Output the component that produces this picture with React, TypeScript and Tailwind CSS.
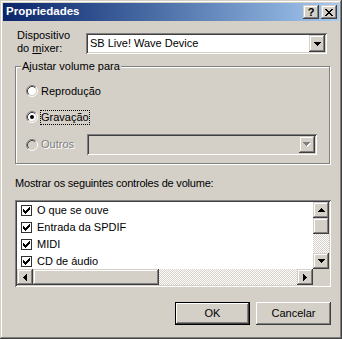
import type { ReactNode } from 'react';

// classic 3D edges
const raisedBtn =
  'shadow-[inset_-1px_-1px_#404040,inset_1px_1px_#ffffff,inset_-2px_-2px_#808080,inset_2px_2px_#d4d0c8]';
const raisedSmall =
  'shadow-[inset_-1px_-1px_#404040,inset_1px_1px_#d4d0c8,inset_-2px_-2px_#808080,inset_2px_2px_#ffffff]';
const sunken =
  'shadow-[inset_1px_1px_#808080,inset_-1px_-1px_#ffffff,inset_2px_2px_#404040,inset_-2px_-2px_#d4d0c8]';
const dither =
  'bg-[repeating-conic-gradient(#d4d0c8_0_25%,#ffffff_0_50%)] bg-[length:2px_2px]';

const Arrow = ({ dir, color = '#000' }: { dir: 'up' | 'down' | 'left' | 'right'; color?: string }) => {
  const paths = {
    down: 'M0 0h7v1H0z M1 1h5v1H1z M2 2h3v1H2z M3 3h1v1H3z',
    up: 'M3 0h1v1H3z M2 1h3v1H2z M1 2h5v1H1z M0 3h7v1H0z',
    right: 'M0 0h1v7H0z M1 1h1v5H1z M2 2h1v3H2z M3 3h1v1H3z',
    left: 'M3 0h1v7H3z M2 1h1v5H2z M1 2h1v3H1z M0 3h1v1H0z',
  };
  const vertical = dir === 'up' || dir === 'down';
  return (
    <svg
      width={vertical ? 7 : 4}
      height={vertical ? 4 : 7}
      viewBox={vertical ? '0 0 7 4' : '0 0 4 7'}
      shapeRendering="crispEdges"
    >
      <path d={paths[dir]} fill={color} />
    </svg>
  );
};

const ScrollButton = ({ dir, className = '' }: { dir: 'up' | 'down' | 'left' | 'right'; className?: string }) => (
  <div className={`flex items-center justify-center bg-[#d4d0c8] ${raisedSmall} ${className}`}>
    <Arrow dir={dir} />
  </div>
);

const Radio = ({ checked = false, disabled = false }: { checked?: boolean; disabled?: boolean }) => (
  <svg width="12" height="12" viewBox="0 0 12 12" className="shrink-0">
    <circle cx="6" cy="6" r="4.5" fill={disabled ? '#d4d0c8' : '#ffffff'} />
    <path d="M9.89 2.11 A5.5 5.5 0 0 0 2.11 9.89" stroke="#808080" fill="none" />
    <path d="M2.11 9.89 A5.5 5.5 0 0 0 9.89 2.11" stroke="#ffffff" fill="none" />
    <path d="M9.18 2.82 A4.5 4.5 0 0 0 2.82 9.18" stroke="#404040" fill="none" />
    <path d="M2.82 9.18 A4.5 4.5 0 0 0 9.18 2.82" stroke="#d4d0c8" fill="none" />
    {checked && <circle cx="6" cy="6" r="2" fill="#000000" />}
  </svg>
);

const Check = () => (
  <svg width="11" height="11" viewBox="0 0 11 11" shapeRendering="crispEdges" className="shrink-0">
    <rect x="0.5" y="0.5" width="10" height="10" fill="#ffffff" stroke="#303030" />
    <path
      d="M2 4h1v3H2z M3 5h1v3H3z M4 6h1v3H4z M5 5h1v3H5z M6 4h1v3H6z M7 3h1v3H7z M8 2h1v3H8z"
      fill="#000000"
    />
  </svg>
);

const Combo = ({ value = '', disabled = false, className = '' }: { value?: string; disabled?: boolean; className?: string }) => (
  <div className={`h-[21px] p-[2px] flex ${sunken} ${className}`}>
    <div className={`flex-1 pl-[2px] leading-[17px] ${disabled ? 'bg-[#d4d0c8]' : 'bg-white'}`}>{value}</div>
    <div className={`w-[16px] h-[17px] flex items-center justify-center bg-[#d4d0c8] ${raisedSmall}`}>
      {disabled ? (
        <div className="relative w-[8px] h-[5px]">
          <div className="absolute left-[1px] top-[1px]">
            <Arrow dir="down" color="#ffffff" />
          </div>
          <div className="absolute left-0 top-0">
            <Arrow dir="down" color="#808080" />
          </div>
        </div>
      ) : (
        <Arrow dir="down" />
      )}
    </div>
  </div>
);

const PushButton = ({ children, isDefault = false }: { children: ReactNode; isDefault?: boolean }) => (
  <div
    className={`w-[75px] h-[23px] flex items-center justify-center bg-[#d4d0c8] ${raisedBtn} ${
      isDefault ? 'border border-black' : ''
    }`}
  >
    {children}
  </div>
);

const controls = ['O que se ouve', 'Entrada da SPDIF', 'MIDI', 'CD de áudio'];

export default function App() {
  return (
    <div
      className={`w-[342px] h-[339px] bg-[#d4d0c8] flex flex-col font-['Liberation_Sans',Arial,sans-serif] text-[11px] text-black shadow-[inset_-1px_-1px_#404040,inset_1px_1px_#d4d0c8,inset_-2px_-2px_#808080,inset_2px_2px_#ffffff]`}
    >
      {/* title bar */}
      <div className="mx-[3px] mt-[3px] h-[18px] flex items-center bg-linear-to-r from-[#0a246a] to-[#a6caf0]">
        <span className="ml-[3px] text-white font-bold text-[11.5px] leading-none">Propriedades</span>
        <div className="ml-auto mr-[2px] flex gap-[2px]">
          <div className={`w-[16px] h-[14px] flex items-center justify-center bg-[#d4d0c8] ${raisedSmall}`}>
            <span className="font-bold text-[11px] leading-none">?</span>
          </div>
          <div className={`w-[16px] h-[14px] flex items-center justify-center bg-[#d4d0c8] ${raisedSmall}`}>
            <svg width="8" height="7" viewBox="0 0 8 7" shapeRendering="crispEdges">
              <path
                d="M0 0h2v1H0z M6 0h2v1H6z M1 1h2v1H1z M5 1h2v1H5z M2 2h4v1H2z M3 3h2v1H3z M2 4h4v1H2z M1 5h2v1H1z M5 5h2v1H5z M0 6h2v1H0z M6 6h2v1H6z"
                fill="#000"
              />
            </svg>
          </div>
        </div>
      </div>

      {/* mixer device */}
      <div className="flex mt-[8px] ml-[17px]">
        <div className="w-[69px] leading-[13px]">
          Dispositivo
          <br />
          do <span className="underline">m</span>ixer:
        </div>
        <Combo className="mt-[4px] w-[241px]" value="SB Live! Wave Device" />
      </div>

      {/* adjust volume group */}
      <fieldset className="ml-[15px] mt-[5px] w-[315px] border border-[#808080] shadow-[1px_1px_0_#ffffff,inset_1px_1px_0_#ffffff] pb-[8px]">
        <legend className="ml-[5px] px-[1px] bg-[#d4d0c8] leading-[13px]">Ajustar volume para</legend>
        <div className="mt-[10px] ml-[10px] h-[16px] flex items-center">
          <Radio />
          <span className="ml-[2px] border border-transparent leading-[13px]">Reprodução</span>
        </div>
        <div className="mt-[10px] ml-[10px] h-[16px] flex items-center">
          <Radio checked />
          <span className="ml-[2px] border border-dotted border-black leading-[13px]">Gravação</span>
        </div>
        <div className="mt-[9px] ml-[10px] h-[21px] flex items-center">
          <Radio disabled />
          <span className="ml-[2px] w-[47px] border border-transparent leading-[13px] text-[#808080] [text-shadow:1px_1px_0_#ffffff]">
            Outros
          </span>
          <Combo disabled className="w-[230px]" />
        </div>
      </fieldset>

      <div className="mt-[13px] ml-[15px] leading-[13px] tracking-[-0.2px]">
        Mostrar os seguintes controles de volume:
      </div>

      {/* controls list */}
      <div className={`mt-[10px] ml-[15px] w-[316px] h-[87px] p-[2px] bg-white ${sunken}`}>
        <div className="h-full grid grid-cols-[1fr_16px] grid-rows-[1fr_16px]">
          <div className="overflow-hidden">
            {controls.map((c) => (
              <div key={c} className="h-[17px] flex items-center">
                <div className="ml-[4px]">
                  <Check />
                </div>
                <span className="ml-[5px] leading-[13px]">{c}</span>
              </div>
            ))}
          </div>
          <div className="flex flex-col">
            <ScrollButton dir="up" className="h-[16px]" />
            <div className={`h-[16px] bg-[#d4d0c8] ${raisedSmall}`} />
            <div className={`flex-1 ${dither}`} />
            <ScrollButton dir="down" className="h-[16px]" />
          </div>
          <div className="flex">
            <ScrollButton dir="left" className="w-[16px]" />
            <div className={`w-[126px] bg-[#d4d0c8] ${raisedSmall}`} />
            <div className={`flex-1 ${dither}`} />
            <ScrollButton dir="right" className="w-[16px]" />
          </div>
          <div className="bg-[#d4d0c8]" />
        </div>
      </div>

      {/* dialog buttons */}
      <div className="mt-[15px] mr-[11px] flex justify-end gap-[6px]">
        <PushButton isDefault>OK</PushButton>
        <PushButton>Cancelar</PushButton>
      </div>
    </div>
  );
}
